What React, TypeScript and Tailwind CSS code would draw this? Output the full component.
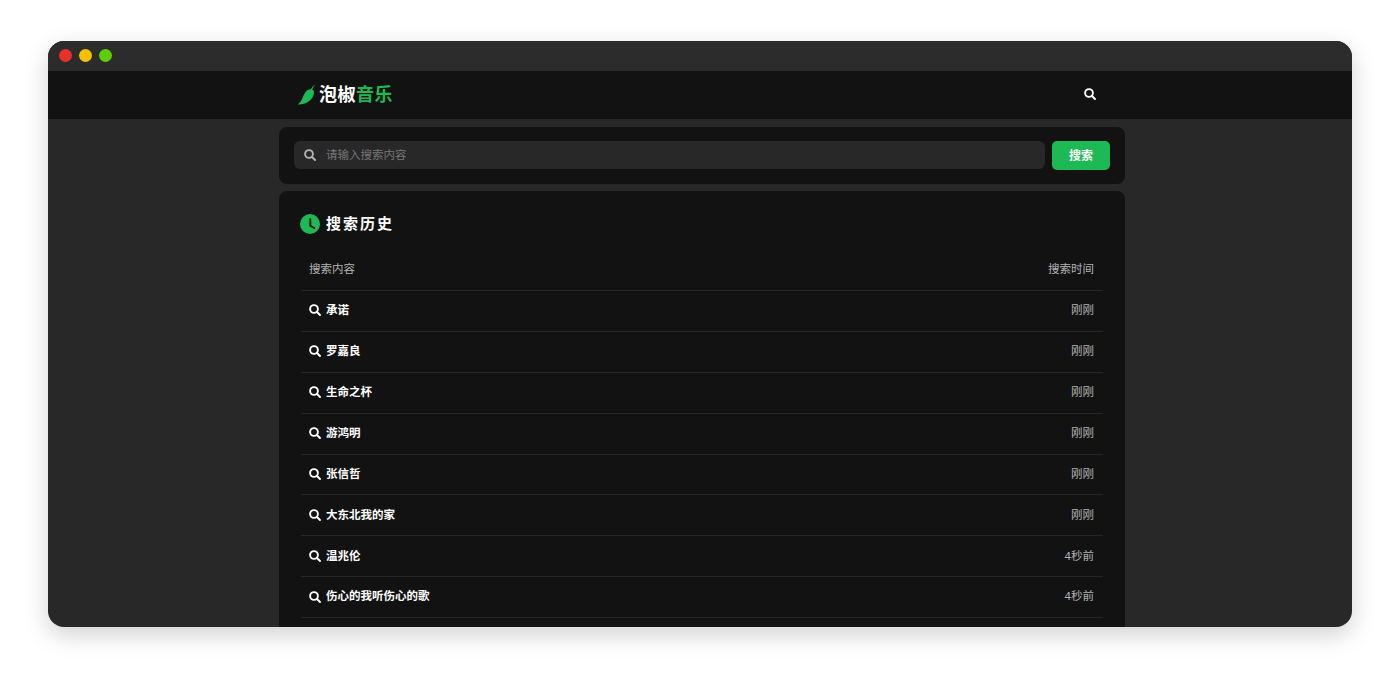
import React from "react";

const rows: [string, string][] = [
  ["承诺", "刚刚"],
  ["罗嘉良", "刚刚"],
  ["生命之杯", "刚刚"],
  ["游鸿明", "刚刚"],
  ["张信哲", "刚刚"],
  ["大东北我的家", "刚刚"],
  ["温兆伦", "4秒前"],
  ["伤心的我听伤心的歌", "4秒前"],
];

function Search({ size, className }: { size: number; className?: string }) {
  return (
    <svg width={size} height={size} viewBox="0 0 24 24" fill="none" stroke="currentColor" strokeWidth="3.8" strokeLinecap="round" className={className}>
      <circle cx="10" cy="10" r="7.8" />
      <path d="M16 16 22 22" />
    </svg>
  );
}

export default function App() {
  return (
    <div className="h-[700px] w-[1400px] overflow-hidden bg-white pt-[41px] pl-[48px] font-['Liberation_Sans','Noto_Sans_CJK_SC',sans-serif]">
      <div className="flex h-[586px] w-[1304px] flex-col overflow-hidden rounded-[16px] bg-[#282828] shadow-[0_8px_24px_rgba(0,0,0,0.18)]">
        <div className="flex h-[30px] shrink-0 items-center gap-[7px] bg-[#2c2c2c] pb-[1px] pl-[11px]">
          <span className="h-[13px] w-[13px] rounded-full bg-[#e9302a]" />
          <span className="h-[13px] w-[13px] rounded-full bg-[#f5c000]" />
          <span className="h-[13px] w-[13px] rounded-full bg-[#5ccf0a]" />
        </div>
        <div className="flex h-[48px] shrink-0 items-center bg-[#121212] pl-[249px]">
          <svg width="20" height="22" viewBox="0 0 20 22" className="mb-[1px]">
            <path d="M0.7 20.5 C3 18.5 4.5 17 5.5 14 C6.5 11 9 6.5 12 5.6 L13.8 5.3 C14.8 3.5 16.5 1.5 18.3 0.5 C17 2 15.8 4 15.2 5.8 C16.6 6.5 17.2 7.5 17 9 C16.7 12 14.5 15.5 11.7 17.5 C8.5 19.8 4.5 20.8 0.7 20.5 Z" fill="#1db954" />
          </svg>
          <span className="ml-[2px] text-[18px] leading-none font-bold tracking-[0.5px] text-white">
            泡椒<span className="text-[#1db954]">音乐</span>
          </span>
          <Search size={12} className="mb-[2px] ml-[691px] text-white" />
        </div>
        <div className="mt-[8px] ml-[231px] flex h-[57px] w-[846px] shrink-0 items-start rounded-[8px] bg-[#121212] px-[15px] pt-[14px]">
          <div className="flex h-[28px] flex-1 items-center rounded-[6px] bg-[#282828] pl-[10px]">
            <Search size={12} className="text-[#b3b3b3]" />
            <span className="mt-[2px] ml-[10px] text-[11.5px] text-[#757575]">请输入搜索内容</span>
          </div>
          <div className="ml-[7px] flex h-[29px] w-[58px] items-center justify-center rounded-[5px] bg-[#1db954] text-[12px] font-bold text-white">搜索</div>
        </div>
        <div className="mt-[7px] ml-[231px] w-[846px] flex-1 overflow-hidden rounded-t-[8px] bg-[#121212] px-[22px] pt-[23px]">
          <div className="flex h-[20px] items-center">
            <svg width="20" height="20" viewBox="0 0 21 21" className="-ml-[1px]">
              <circle cx="10.5" cy="10.5" r="10.5" fill="#1db954" />
              <path d="M10.8 5.2 V12.3 L15 14.7" stroke="#121212" strokeWidth="2" fill="none" strokeLinecap="round" strokeLinejoin="round" />
            </svg>
            <span className="ml-[6px] text-[15px] font-bold tracking-[2px] text-white">搜索历史</span>
          </div>
          <div className="mt-[16px] flex h-[41px] items-center justify-between border-b border-[#282828] pr-[9px] pl-[8px] text-[11.5px] text-[#b3b3b3]">
            <span>搜索内容</span>
            <span>搜索时间</span>
          </div>
          {rows.map(([a, b]) => (
            <div key={a} className="flex h-[40.875px] items-center justify-between border-b border-[#282828] pr-[9px] pl-[8px]">
              <span className="flex items-center text-[11.5px] font-bold text-white">
                <Search size={12} className="mr-[5px] mb-[1px]" />
                {a}
              </span>
              <span className="text-[11.5px] text-[#b3b3b3]">{b}</span>
            </div>
          ))}
        </div>
      </div>
    </div>
  );
}
